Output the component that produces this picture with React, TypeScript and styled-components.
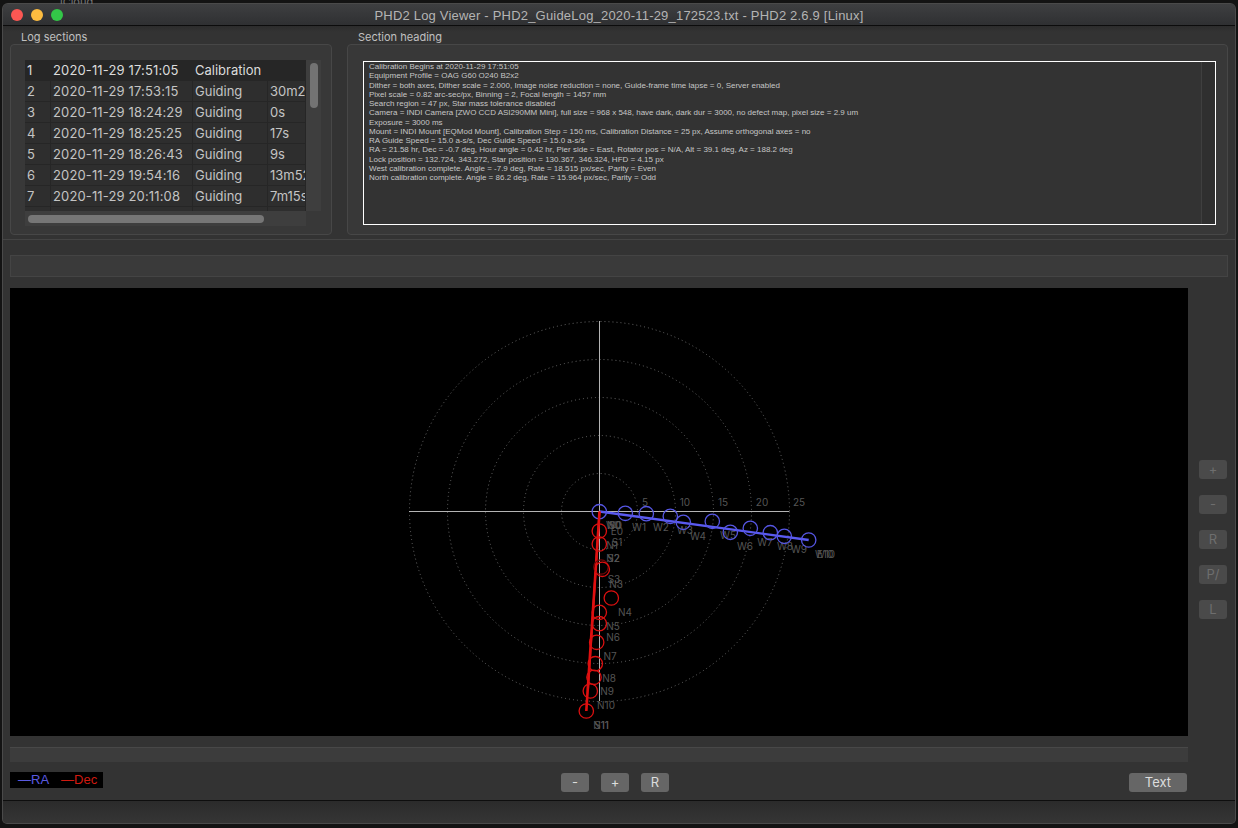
import React from 'react';
import styled, { createGlobalStyle } from 'styled-components';

const Global = createGlobalStyle`
  html, body { margin: 0; padding: 0; background: #131313; overflow: hidden; }
  body { font-family: Inter, "Liberation Sans", sans-serif; width: 1238px; height: 828px; }
`;
const Backdrop = styled.div`
  height: 4px; overflow: hidden; padding-left: 60px;
  font-size: 11px; line-height: 4px; color: #777;
`;
const Win = styled.div`
  margin-left: 3px; width: 1232px; height: 819px; box-sizing: border-box;
  display: flex; flex-direction: column; background: #333;
  border-radius: 5px 5px 4px 4px; overflow: hidden; box-shadow: 0 0 0 1px #4a4a4a;
`;
const TitleBar = styled.div`
  height: 20px; padding-top: 1px; flex: none; position: relative; display: flex; align-items: center; justify-content: center;
  background: linear-gradient(#3e3f41, #2f3032); border-bottom: 1px solid #0c0c0c;
  font-size: 13px; color: #b4b4b4; font-family: "Liberation Sans", sans-serif; letter-spacing: 0.2px;
`;
const Lights = styled.div`
  position: absolute; left: 8px; top: 5px; display: flex; gap: 8px;
`;
const Light = styled.span<{ $c: string }>`
  width: 12px; height: 12px; border-radius: 50%; background: ${p => p.$c};
`;
const Top = styled.div`
  height: 214px; flex: none; box-sizing: border-box; padding: 4px 7px 0; display: flex; gap: 15px;
  border-bottom: 1px solid #444; background: linear-gradient(#2c2c2c, #333 6px);
`;
const Group = styled.div<{ $w: number }>`
  width: ${p => p.$w}px; display: flex; flex-direction: column;
`;
const GroupLabel = styled.div`
  height: 14px; padding-left: 11px; font-size: 11px; line-height: 14px; color: #c0c0c0;
`;
const GroupBox = styled.div<{ $pad: string }>`
  height: 191px; box-sizing: border-box; padding: ${p => p.$pad}; background: #383838;
  border: 1px solid #474747; border-radius: 4px;
`;
const TableWrap = styled.div`
  display: grid; grid-template-columns: 281px 15px; grid-template-rows: 151px 15px; width: 296px;
`;
const Table = styled.div`
  overflow: hidden; background: #2c2c2c;
`;
const Row = styled.div<{ $sel?: boolean }>`
  height: 21px; display: grid; grid-template-columns: 26px 142px 75px 38px; font-size: 13px; line-height: 21px;
  color: ${p => (p.$sel ? '#dcdcdc' : '#c4c4c4')}; background: ${p => (p.$sel ? '#262626' : '#2e2e2e')};
`;
const Cell = styled.div<{ $sel?: boolean }>`
  box-sizing: border-box; padding-left: 2px; white-space: nowrap; overflow: hidden;
  border-bottom: 1px solid #262626; border-right: 1px solid ${p => (p.$sel ? 'transparent' : '#262626')};
  &:nth-child(2) { letter-spacing: 0.14px; }
`;
const VTrack = styled.div`
  background: #3e3e3e; padding: 3px 4px 0;
`;
const VThumb = styled.div`
  width: 8px; height: 45px; border-radius: 4px; background: #737373;
`;
const HTrack = styled.div`
  background: #3e3e3e; padding: 4px 3px 0;
`;
const HThumb = styled.div`
  width: 236px; height: 8px; border-radius: 4px; background: #767676;
`;
const Corner = styled.div`background: #383838;`;
const LogBox = styled.div`
  height: 164px; box-sizing: border-box; border: 1px solid #fff; background: #333; display: flex;
`;
const LogText = styled.pre`
  flex: 1; margin: 0; padding: 0 5px; font-family: "Liberation Sans", sans-serif; font-size: 8px;
  line-height: 9.27px; color: #c6c6c6; overflow: hidden;
`;
const LogBar = styled.div`
  width: 13px; flex: none; background: #2f2f2f; border-left: 1px solid #3f3f3f;
`;
const Main = styled.div`
  flex: 1; box-sizing: border-box; padding: 15px 7px 0; display: flex; flex-direction: column; min-height: 0;
`;
const WideBar = styled.div`
  height: 22px; flex: none; box-sizing: border-box; background: #3a3a3a; border: 1px solid #444; width: 1218px;
`;
const PlotRow = styled.div`
  margin-top: 11px; display: flex;
`;
const Plot = styled.svg`
  width: 1178px; height: 448px; display: block; background: #000; flex: none;
`;
const Side = styled.div`
  margin-left: 11px; padding-top: 172px; display: flex; flex-direction: column; gap: 16px;
`;
const SideBtn = styled.div`
  width: 28px; height: 19px; border-radius: 3px; background: #4a4a4a; color: #6e6e6e;
  font-size: 13px; line-height: 19px; text-align: center;
`;
const LowBar = styled.div`
  margin-top: 11px; height: 15px; flex: none; width: 1178px; box-sizing: border-box; background: #3c3c3c; border-top: 1px solid #484848;
`;
const Controls = styled.div`
  margin-top: 10px; width: 1177px; display: flex; align-items: flex-start;
`;
const Legend = styled.div`
  width: 93px; height: 16px; background: #000; margin-right: 458px; box-sizing: border-box; padding-left: 8px;
  display: flex; gap: 12px; font-family: "Liberation Sans", sans-serif; font-size: 13px; line-height: 16px;
`;
const LegendItem = styled.span<{ $c: string }>`
  color: ${p => p.$c};
`;
const Btn = styled.div<{ $w?: number; $end?: boolean }>`
  margin-top: 1px; width: ${p => p.$w ?? 28}px; height: 19px; border-radius: 3px; background: #666; color: #ddd;
  font-size: 13px; line-height: 19px; text-align: center; margin-right: ${p => (p.$end ? 0 : 12)}px;
`;
const Spacer = styled.div`flex: 1;`;
const Status = styled.div`
  height: 22px; flex: none; border-top: 1px solid #0e0e0e; background: linear-gradient(#2b2b2b, #353535);
`;

const rows = [
  ['1', '2020-11-29 17:51:05', 'Calibration', ''],
  ['2', '2020-11-29 17:53:15', 'Guiding', '30m25s'],
  ['3', '2020-11-29 18:24:29', 'Guiding', '0s'],
  ['4', '2020-11-29 18:25:25', 'Guiding', '17s'],
  ['5', '2020-11-29 18:26:43', 'Guiding', '9s'],
  ['6', '2020-11-29 19:54:16', 'Guiding', '13m52s'],
  ['7', '2020-11-29 20:11:08', 'Guiding', '7m15s'],
  ['', '', '', ''],
];

const log = `Calibration Begins at 2020-11-29 17:51:05
Equipment Profile = OAG G60 O240 B2x2
Dither = both axes, Dither scale = 2.000, Image noise reduction = none, Guide-frame time lapse = 0, Server enabled
Pixel scale = 0.82 arc-sec/px, Binning = 2, Focal length = 1457 mm
Search region = 47 px, Star mass tolerance disabled
Camera = INDI Camera [ZWO CCD ASI290MM Mini], full size = 968 x 548, have dark, dark dur = 3000, no defect map, pixel size = 2.9 um
Exposure = 3000 ms
Mount = INDI Mount [EQMod Mount], Calibration Step = 150 ms, Calibration Distance = 25 px, Assume orthogonal axes = no
RA Guide Speed = 15.0 a-s/s, Dec Guide Speed = 15.0 a-s/s
RA = 21.58 hr, Dec = -0.7 deg, Hour angle = 0.42 hr, Pier side = East, Rotator pos = N/A, Alt = 39.1 deg, Az = 188.2 deg
Lock position = 132.724, 343.272, Star position = 130.367, 346.324, HFD = 4.15 px
West calibration complete. Angle = -7.9 deg, Rate = 18.515 px/sec, Parity = Even
North calibration complete. Angle = 86.2 deg, Rate = 15.964 px/sec, Parity = Odd`;

const OX = 10, OY = 288;
const blue = [[599.3,511.7],[625.3,513.3],[646.3,513.7],[670.3,516.3],[683.3,522.3],[712.3,521.3],[730.3,532.3],[750.3,528.3],[770.3,532.7],[784.3,536.3],[808.7,540]];
const red = [[599.3,531],[599.3,544],[601,567],[602.3,569.3],[611.3,598],[599.3,612.3],[599.3,623.7],[596.7,642.3],[595.3,663.7],[594,677.3],[590.3,691],[586.3,711]];
const labels: [string, number, number][] = [
  ['W0',614,525],['E0',617,531],['N0',614,525],['S0',615,525],['N1',612,545],['S1',617,542],['N2',613,558],['S2',613.5,558],['N3',616,584],['S3',614,579],['N4',625,612],['N5',613,626],['N6',613,637],['N7',610,656],['N8',609,678],['N9',607,691],['N10',606,705],['N11',601,725],['S11',601.5,725],
  ['W1',639,527],['W2',661,527],['W3',685,530],['W4',698,536],['W5',728,535],['W6',745,546],['W7',765,542],['W8',785,546],['W9',799,549],['W10',825,554],['E10',825,554],
];
const ticks: [string, number][] = [['5',645],['10',685],['15',723],['20',762],['25',799]];

const Chart = () => (
  <Plot viewBox={`${OX} ${OY} 1178 448`}>
    {[38, 76, 114, 152, 190].map(r => (
      <circle key={r} cx={599.5} cy={511.5} r={r} fill="none" stroke="#6a6a6a" strokeWidth={1} strokeDasharray="1 3" />
    ))}
    <line x1={409} y1={511.5} x2={789} y2={511.5} stroke="#b4b4b4" strokeWidth={1} />
    <line x1={599.5} y1={321} x2={599.5} y2={701} stroke="#b4b4b4" strokeWidth={1} />
    {ticks.map(([t, x]) => (
      <text key={t} x={x} y={506} fontSize={10} fill="#555" fontFamily="Inter, sans-serif" textAnchor="middle">{t}</text>
    ))}
    {labels.map(([t, x, y]) => (
      <text key={t} x={x} y={y + 3.5} fontSize={10} fill="#555" fontFamily="Inter, sans-serif" textAnchor="middle">{t}</text>
    ))}
    <line x1={599.5} y1={511.5} x2={808.7} y2={540} stroke="#5a5af0" strokeWidth={2.4} />
    {blue.map(([x, y], i) => (
      <circle key={i} cx={x} cy={y} r={7.2} fill="none" stroke="#5656e4" strokeWidth={1.3} />
    ))}
    <line x1={599.5} y1={511.5} x2={586.3} y2={711} stroke="#e01010" strokeWidth={2.6} />
    <line x1={599.5} y1={511.5} x2={588} y2={690} stroke="#e01010" strokeWidth={2} />
    {red.map(([x, y], i) => (
      <circle key={i} cx={x} cy={y} r={7.2} fill="none" stroke={i === 2 ? '#700808' : '#dc1010'} strokeWidth={1.3} />
    ))}
  </Plot>
);

export default function App() {
  return (
    <>
      <Global />
      <Backdrop>iCloud</Backdrop>
      <Win>
        <TitleBar>
          <Lights>
            <Light $c="#fc5753" /><Light $c="#fdbc40" /><Light $c="#33c748" />
          </Lights>
          PHD2 Log Viewer - PHD2_GuideLog_2020-11-29_172523.txt - PHD2 2.6.9 [Linux]
        </TitleBar>
        <Top>
          <Group $w={322}>
            <GroupLabel>Log sections</GroupLabel>
            <GroupBox $pad="15px 0 0 14px">
              <TableWrap>
                <Table>
                  {rows.map((r, i) => (
                    <Row key={i} $sel={i === 0}>
                      {r.map((c, j) => <Cell key={j} $sel={i === 0}>{c}</Cell>)}
                    </Row>
                  ))}
                </Table>
                <VTrack><VThumb /></VTrack>
                <HTrack><HThumb /></HTrack>
                <Corner />
              </TableWrap>
            </GroupBox>
          </Group>
          <Group $w={881}>
            <GroupLabel>Section heading</GroupLabel>
            <GroupBox $pad="16px 11px 0 15px">
              <LogBox>
                <LogText>{log}</LogText>
                <LogBar />
              </LogBox>
            </GroupBox>
          </Group>
        </Top>
        <Main>
          <WideBar />
          <PlotRow>
            <Chart />
            <Side>
              {['+', '-', 'R', 'P/', 'L'].map(b => <SideBtn key={b}>{b}</SideBtn>)}
            </Side>
          </PlotRow>
          <LowBar />
          <Controls>
            <Legend>
              <LegendItem $c="#5a5ae0">—RA</LegendItem>
              <LegendItem $c="#d01a10">—Dec</LegendItem>
            </Legend>
            <Btn>-</Btn>
            <Btn>+</Btn>
            <Btn>R</Btn>
            <Spacer />
            <Btn $w={58} $end>Text</Btn>
          </Controls>
        </Main>
        <Status />
      </Win>
    </>
  );
}
